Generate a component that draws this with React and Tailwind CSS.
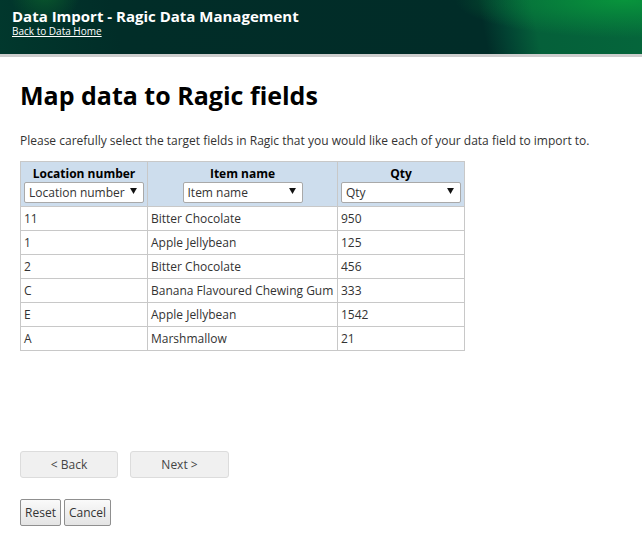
const rows = [
  ["11", "Bitter Chocolate", "950"],
  ["1", "Apple Jellybean", "125"],
  ["2", "Bitter Chocolate", "456"],
  ["C", "Banana Flavoured Chewing Gum", "333"],
  ["E", "Apple Jellybean", "1542"],
  ["A", "Marshmallow", "21"],
];

function FakeSelect({ label }) {
  return (
    <div className="mx-auto flex h-[21px] w-[120px] items-center justify-between rounded-[2px] border border-[#a9a9a9] bg-white pl-[4px] pr-[6px] text-[12px] font-normal leading-none text-[#333]">
      <span className="whitespace-nowrap">{label}</span>
      <svg width="7" height="6" viewBox="0 0 8 7" className="mb-[3px]"><path d="M0 0h8L4 7z" fill="#111" /></svg>
    </div>
  );
}

export default function App() {
  return (
    <div className="min-h-[557px] bg-white font-['Open_Sans','Noto_Sans',sans-serif] text-[#333]">
      <header className="relative h-[57px] overflow-hidden border-b-[3px] border-[#cdcdcd] bg-[radial-gradient(ellipse_170px_38px_at_625px_0px,rgba(8,148,60,1),rgba(8,148,60,0)),radial-gradient(circle_36px_at_45px_-10px,rgba(12,100,45,0.8),rgba(12,100,45,0)),linear-gradient(78deg,#01382d_0px,#012d28_120px,#012c28_478px,#024232_500px,#05603a_530px,#05663b_642px)] pl-[12px] pt-[7px] text-white">
        <div className="h-[18px] text-[15px] font-bold leading-[18px]">Data Import - Ragic Data Management</div>
        <a className="block text-[10px] leading-[12px] underline">Back to Data Home</a>
      </header>
      <main className="px-[20px]">
        <h1 className="mt-[21px] text-[25px] font-bold leading-[34px] text-black">Map data to Ragic fields</h1>
        <p className="mt-[20px] text-[12px] leading-[18px]">Please carefully select the target fields in Ragic that you would like each of your data field to import to.</p>
        <table className="mt-[11px] w-[445px] table-fixed border-collapse text-[12px]">
          <colgroup>
            <col className="w-[127px]" />
            <col className="w-[190px]" />
            <col className="w-[127px]" />
          </colgroup>
          <thead>
            <tr className="h-[45px] bg-[#cddded] text-black">
              <th className="border border-[#c8c8c8] px-[3px] pb-[3px] pt-[3px] align-top text-[12px] leading-[17px]">
                Location number
                <FakeSelect label="Location number" />
              </th>
              <th className="border border-[#c8c8c8] px-[3px] pb-[3px] pt-[3px] align-top text-[12px] leading-[17px]">
                Item name
                <FakeSelect label="Item name" />
              </th>
              <th className="border border-[#c8c8c8] px-[3px] pb-[3px] pt-[3px] align-top text-[12px] leading-[17px]">
                Qty
                <FakeSelect label="Qty" />
              </th>
            </tr>
          </thead>
          <tbody>
            {rows.map((r, i) => (
              <tr key={i} className="h-[24px]">
                {r.map((c, j) => (
                  <td key={j} className="border border-[#c8c8c8] px-[3px] py-0 leading-[18px] whitespace-nowrap">{c}</td>
                ))}
              </tr>
            ))}
          </tbody>
        </table>
        <div className="mt-[100px] flex gap-[12px]">
          <button className="h-[27px] w-[98px] rounded-[3px] border border-[#dcdcdc] bg-[#f0f0f0] text-[12px] text-[#444]">&lt; Back</button>
          <button className="h-[27px] w-[99px] rounded-[3px] border border-[#dcdcdc] bg-[#f0f0f0] text-[12px] text-[#444]">Next &gt;</button>
        </div>
        <div className="mt-[21px] flex gap-[3px]">
          <button className="h-[27px] w-[41px] rounded-[2px] border border-[#8f8f8f] bg-[linear-gradient(#fafafa,#e4e4e4)] text-[12px] text-[#333]">Reset</button>
          <button className="h-[27px] w-[47px] rounded-[2px] border border-[#8f8f8f] bg-[linear-gradient(#fafafa,#e4e4e4)] text-[12px] text-[#333]">Cancel</button>
        </div>
      </main>
    </div>
  );
}
